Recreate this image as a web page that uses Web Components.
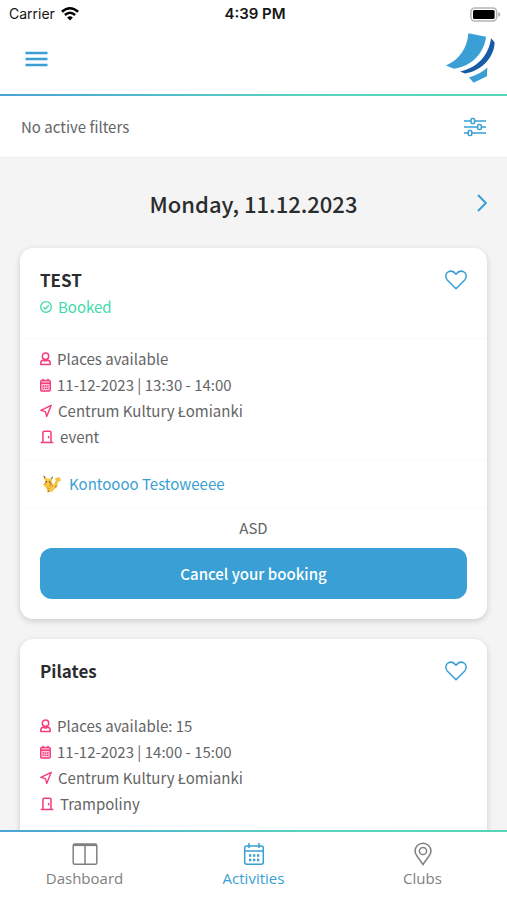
<!DOCTYPE html>
<html lang="en">
<head>
<meta charset="utf-8">
<meta name="viewport" content="width=device-width, initial-scale=1">
<title>Activities</title>
<style>
  :root {
    --blue: #399fd4;
    --green: #3fd9ac;
    --pink: #f53c7d;
    --ink: #2b2c2e;
    --text: #646566;
    --line: #f9f9f9;
    --page: #f4f4f4;
    --edge: linear-gradient(90deg, #4aa3d6, #5ad3bf 60%, #55d6b6);
  }
  body { margin: 0; font: 15px/26px "Noto Sans CJK SC", "Noto Sans", sans-serif; color: var(--text); }
</style>
</head>
<body>
<app-shell>
  <status-bar slot="top" carrier="Carrier" time="4:39 PM"></status-bar>
  <app-header slot="top"></app-header>
  <filter-bar slot="top">No active filters</filter-bar>
  <day-picker>Monday, 11.12.2023</day-picker>
  <activity-card heading="TEST" state="Booked">
    <info-row icon="user">Places available</info-row>
    <info-row icon="date">11-12-2023 | 13:30 - 14:00</info-row>
    <info-row icon="place">Centrum Kultury Łomianki</info-row>
    <info-row icon="door">event</info-row>
    <trainer-link slot="trainer">Kontoooo Testoweeee</trainer-link>
    <booking-action slot="action" note="ASD">Cancel your booking</booking-action>
  </activity-card>
  <activity-card heading="Pilates">
    <info-row icon="user">Places available: 15</info-row>
    <info-row icon="date">11-12-2023 | 14:00 - 15:00</info-row>
    <info-row icon="place">Centrum Kultury Łomianki</info-row>
    <info-row icon="door">Trampoliny</info-row>
  </activity-card>
  <tab-bar slot="bottom">
    <tab-item icon="dashboard">Dashboard</tab-item>
    <tab-item icon="calendar" active>Activities</tab-item>
    <tab-item icon="pin">Clubs</tab-item>
  </tab-bar>
</app-shell>

<script>
const reset = `:host,*{box-sizing:border-box} svg{display:block;flex:none} button{font:inherit;color:inherit;background:none;border:0;padding:0;margin:0;cursor:pointer} a{color:inherit;text-decoration:none}`;

function define(name, render) {
  customElements.define(name, class extends HTMLElement {
    connectedCallback() {
      if (this.shadowRoot) return;
      const t = document.createElement('template');
      t.innerHTML = render(this);
      this.attachShadow({ mode: 'open' }).append(t.content.cloneNode(true));
    }
  });
}

const icons = {
  user: `<svg width="11" height="14" viewBox="0 0 11 14" fill="none" stroke="currentColor" stroke-width="1.500"><circle cx="5.500" cy="4.200" r="3.200"/><path d="M3.300 8.200C1.500 8.400.8 9.600.8 11v1.500h9.400V11c0-1.400-.7-2.600-2.500-2.800-1.400.9-3 .9-4.400 0Z" stroke-linejoin="round"/></svg>`,
  date: `<svg width="11" height="14" viewBox="0 0 11 14" fill="none" stroke="currentColor"><rect x=".7" y="2.500" width="9.600" height="10.500" rx="1.200" fill="currentColor" fill-opacity=".3" stroke-width="1.400"/><path d="M3 .8v2M8 .8v2" stroke-width="1.500"/><path d="M1 5.200h9" stroke-width="1.500"/><path d="M2.600 8h6M2.600 10.300h6" stroke-width="1.300" stroke-dasharray="1.500 .7"/></svg>`,
  place: `<svg width="12" height="14" viewBox="0 0 12 14" fill="none" stroke="currentColor" stroke-width="1.400" stroke-linejoin="round"><path d="M11.200 1.300.8 6.300 5.400 7.600 6.700 12.400Z"/></svg>`,
  door: `<svg width="14" height="14" viewBox="0 0 14 14" fill="none" stroke="currentColor" stroke-width="1.500"><path d="M.8 12.600h3M2.900 12.600V2.600Q2.900 1.300 4.200 1.300h5.500Q11 1.300 11 2.600v10h2.400M2.900 12.600H11"/><path d="M8.600 6v2.300"/></svg>`,
  dashboard: `<svg width="26" height="24" viewBox="0 0 26 24" fill="none" stroke="currentColor" stroke-width="1.500"><rect x="1.200" y="2.200" width="23.600" height="20" rx="1.500"/><path d="M13 2v20"/><path d="M1.500 2.800h23" stroke-width="2.600"/></svg>`,
  calendar: `<svg width="26" height="24" viewBox="0 0 26 24" fill="none" stroke="currentColor" stroke-width="1.500"><rect x="3.700" y="4" width="18.600" height="18.300" rx="2"/><path d="M4 9h18M8 1v5M18 1v5"/><path d="M8 13.500h10.500M8 18h10.500" stroke-width="2.300" stroke-dasharray="2.300 1.700"/></svg>`,
  pin: `<svg width="26" height="24" viewBox="0 0 26 24" fill="none" stroke="currentColor" stroke-width="1.500"><path d="M13 22.500C10 17.500 5 13 5 9.200a8 8 0 0 1 16 0c0 3.800-5 8.300-8 13.300Z"/><circle cx="13" cy="9" r="3.600"/></svg>`
};

define('app-shell', () => `<style>${reset}
  :host{display:flex;flex-direction:column;height:100vh;background:var(--page)}
  header{background:#fff;flex:none}
  main{flex:1;min-height:0;overflow-y:auto;scrollbar-width:none;padding:0 20px 20px;display:flex;flex-direction:column;gap:20px}
  main::-webkit-scrollbar{display:none}
  </style><header><slot name="top"></slot></header><main><slot></slot></main><slot name="bottom"></slot>`);

define('status-bar', el => `<style>${reset}
  :host{display:grid;grid-template-columns:1fr auto 1fr;align-items:center;height:28px;padding:0 6px 0 9px;font:14px/20px Inter,sans-serif;color:#151515}
  .l{display:flex;align-items:center;gap:6px} b{font-size:15px;font-weight:600} .r{justify-self:end}
  </style><span class="l"><span>${el.getAttribute('carrier')}</span>
  <svg width="18" height="14" viewBox="0 0 18 14" fill="none" stroke="#000" stroke-width="2.500"><path d="M.9 4.800Q9-2.200 17.100 4.800"/><path d="M3.900 8Q9 3.500 14.100 8"/><path d="M9 13.600 6.100 10.500Q9 8.100 11.900 10.500Z" fill="#000" stroke="none"/></svg></span>
  <b>${el.getAttribute('time')}</b>
  <svg class="r" width="31" height="15" viewBox="0 0 31 15"><rect x=".9" y=".9" width="25.800" height="13.200" rx="4" fill="#fff" stroke="#b5b5b5" stroke-width="1.500"/><rect x="3" y="3" width="21.600" height="9" rx="1.500" fill="#000"/><path d="M28.300 5q2 .8 2 2.500t-2 2.500Z" fill="#aaa"/></svg>`);

define('app-header', () => `<style>${reset}
  :host{display:flex;justify-content:space-between;align-items:center;height:68px;padding:0 11px 6px 25px;border-bottom:2px solid;border-image:var(--edge) 1}
  </style><button aria-label="Menu"><svg width="23" height="18" viewBox="0 0 23 18" stroke="var(--blue)" stroke-width="2.400"><path d="M.5 4h22M.5 10h22M.5 16h22"/></svg></button>
  <a href="#" aria-label="Home"><svg width="50" height="50" viewBox="0 0 50 50"><path d="M22.300.3 40 3.700C39 16 29 33 8 35.700Q4 34.500 0 32.500C13 27 21.500 15 22.300.3Z" fill="#399fd4"/><path d="M45 5.200 48.600 9.200C48.500 23 37 37.500 19 40.500L14 38.500C31 35 43 22 45 5.200Z" fill="#175ca6"/><path d="M41.300 34.500 41 43.200 27.500 49.700 23 44.300Q34 41.500 41.300 34.500Z" fill="#399fd4"/></svg></a>`);

define('filter-bar', () => `<style>${reset}
  :host{display:flex;justify-content:space-between;align-items:center;height:62px;padding:0 21px;border-bottom:1px solid #ededed}
  </style><span><slot></slot></span><button aria-label="Filters"><svg width="22" height="20" viewBox="0 0 22 20" fill="none" stroke="var(--blue)" stroke-width="1.500"><path d="M0 4h7M11 4h11M0 10h13.500M17.500 10H22M0 16h4M8 16h14"/><rect x="7" y="1.500" width="3.600" height="5" rx="1.300"/><rect x="13.700" y="7.500" width="3.600" height="5" rx="1.300"/><rect x="4.200" y="13.500" width="3.600" height="5" rx="1.300"/></svg></button>`);

define('day-picker', () => `<style>${reset}
  :host{display:grid;grid-template-columns:10px 1fr 10px;align-items:center;padding:28px 0 8px;flex:none}
  h1{grid-column:2;margin:0;text-align:center;font-size:22px;line-height:34px;font-weight:500;color:var(--ink)}
  </style><h1><slot></slot></h1><button aria-label="Next day"><svg width="10" height="18" viewBox="0 0 10 18" fill="none" stroke="var(--blue)" stroke-width="2"><path d="m1 1 7.800 8L1 17"/></svg></button>`);

define('activity-card', el => `<style>${reset}
  :host{display:block;flex:none;background:#fff;border-radius:13px;box-shadow:0 2px 6px rgba(0,0,0,.16)}
  header{display:flex;justify-content:space-between;align-items:flex-start;padding:18px 20px 20px}
  header.on{padding-bottom:18px}
  h2{margin:0;font-size:17px;line-height:28px;font-weight:700;color:var(--ink)}
  .state{display:flex;align-items:center;gap:6px;color:var(--green)}
  button{padding-top:4px}
  .info{border-top:1px solid transparent;padding:7px 20px 30px}
  .on + .info{border-color:var(--line);padding-bottom:10px}
  </style><header class="${el.hasAttribute('state') ? 'on' : ''}"><div><h2>${el.getAttribute('heading')}</h2>${el.hasAttribute('state') ? `<div class="state"><svg width="12" height="12" viewBox="0 0 12 12" fill="none" stroke="currentColor" stroke-width="1.300"><circle cx="6" cy="6" r="5.300"/><path d="m3.400 6.200 1.900 1.900 3.500-3.900"/></svg><span>${el.getAttribute('state')}</span></div>` : ''}</div>
  <button aria-label="Add to favourites"><svg width="22" height="20" viewBox="0 0 22 20" fill="none" stroke="var(--blue)" stroke-width="1.500" stroke-linejoin="round"><path d="M11 18.800 2.300 10C-.1 7.300.5 3.400 3.200 1.900 6 .4 9 1.500 11 4.200c2-2.700 5-3.800 7.800-2.300 2.700 1.500 3.300 5.400.9 8.100Z"/></svg></button></header>
  <div class="info"><slot></slot></div><slot name="trainer"></slot><slot name="action"></slot>`);

define('info-row', el => `<style>${reset}
  :host{display:flex;align-items:center;gap:6px} svg{color:var(--pink)}
  </style>${icons[el.getAttribute('icon')]}<span><slot></slot></span>`);

define('trainer-link', () => `<style>${reset}
  :host{display:block;border-top:1px solid var(--line);border-bottom:1px solid var(--line);padding:10px 22px}
  a{display:flex;align-items:center;gap:8px;color:var(--blue)}
  </style><a href="#"><svg width="19" height="18" viewBox="0 0 19 18"><path d="M12.500 8 13.800 5.500 12.800 3.500 17.500 2 19 5.500 15.800 7.200 15.600 10.300 12.500 11.500Z" fill="#f4c33c"/><path d="M3 5.500 1.400.6 5.200 3.400 8.500 4.100 11 .9 9.600 6.200 10.600 8.500 13.600 10.200 13 14 10.800 15.200 11 17.200 8.400 16.300 5.600 17.600 5.400 15 3.500 12.200.4 9 3.200 9Z" fill="#f6c844"/><path d="M1.400.6 3.300 2 2.600 3.800ZM11 .9 10.200 3.800 8.700 3.700Z" fill="#5a4328"/><path d="m12.600 11.500 3-1.200-1.800 2.900ZM5.700 15l3 1-3 1.500Z" fill="#c47c26"/><path d="M7 10.500q2.500 1.500 4 0M5 13l3 .5" stroke="#d99b2d" fill="none"/><circle cx="4.300" cy="6.700" r=".7" fill="#3a2c20"/><circle cx="7.700" cy="7" r=".7" fill="#3a2c20"/><circle cx="3.300" cy="8.500" r=".8" fill="#e35b3b"/><circle cx="8.800" cy="8.900" r=".9" fill="#e35b3b"/></svg><span><slot></slot></span></a>`);

define('booking-action', el => `<style>${reset}
  :host{display:flex;flex-direction:column;gap:7px;padding:7px 20px 20px;text-align:center}
  p{margin:0}
  button{width:100%;padding:12px;line-height:27px;border-radius:12px;background:var(--blue);color:#fff;font-weight:500}
  </style><p>${el.getAttribute('note')}</p><button><slot></slot></button>`);

define('tab-bar', () => `<style>${reset}
  :host{display:block;flex:none;background:#fff;border-top:2px solid;border-image:var(--edge) 1}
  nav{display:grid;grid-template-columns:repeat(3,1fr);padding:10px 0 12px}
  </style><nav><slot></slot></nav>`);

define('tab-item', el => `<style>${reset}
  :host{display:block;font:15px/20px "Open Sans",sans-serif;color:#808080}
  :host([active]){color:var(--blue)}
  a{display:flex;flex-direction:column;align-items:center;gap:2px}
  </style><a href="#">${icons[el.getAttribute('icon')]}<span><slot></slot></span></a>`);
</script>
</body>
</html>
